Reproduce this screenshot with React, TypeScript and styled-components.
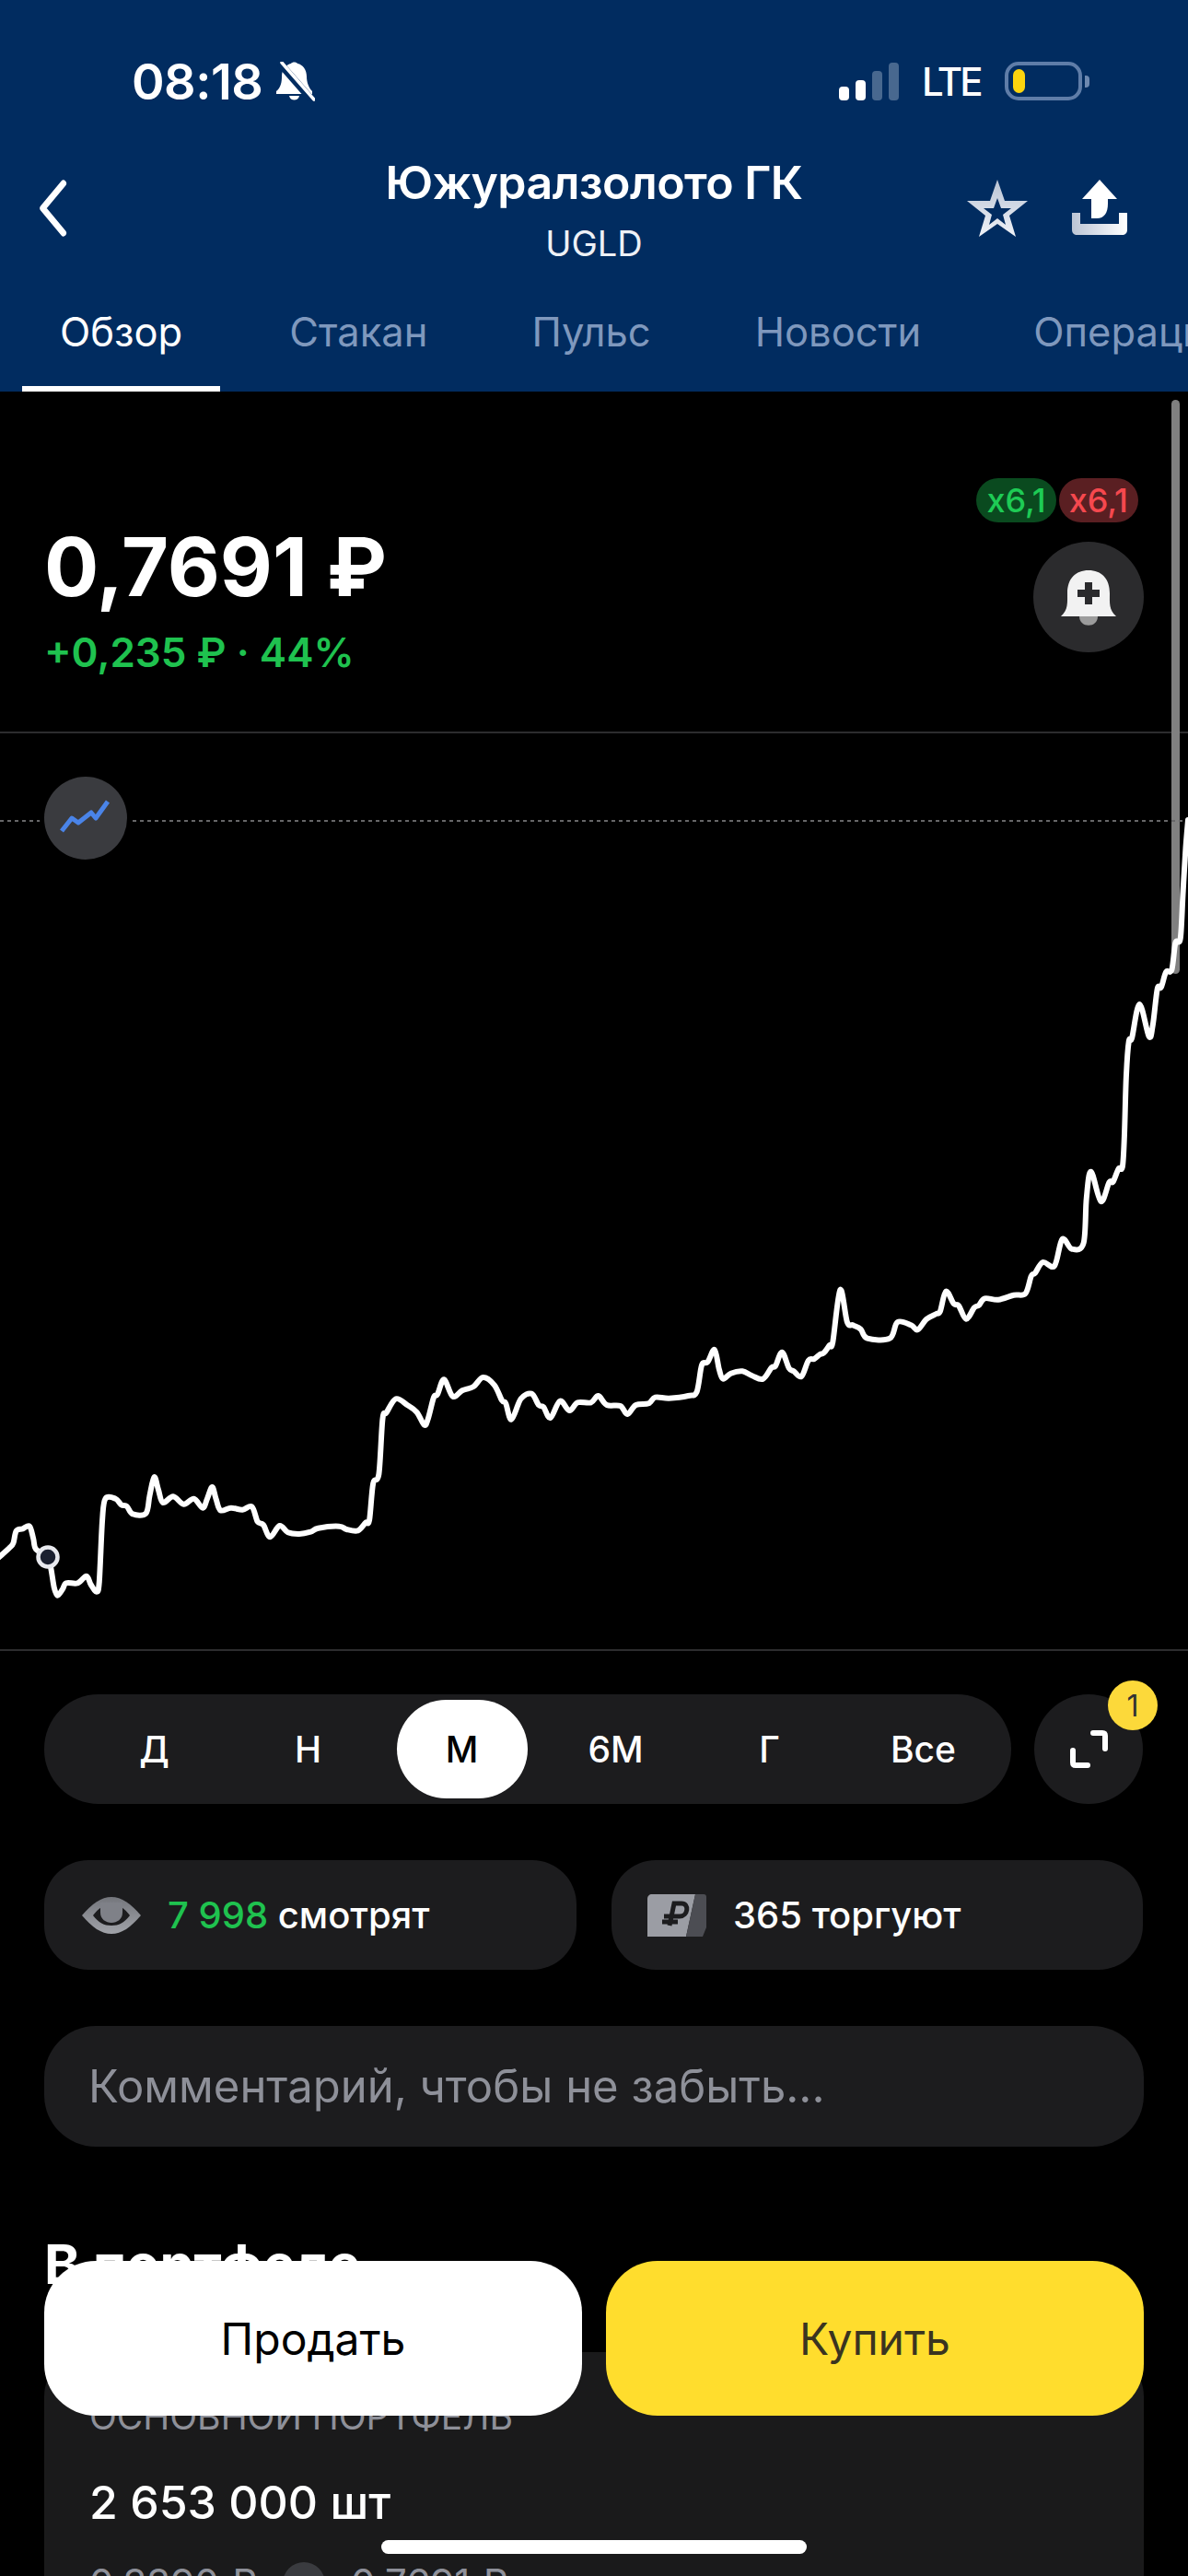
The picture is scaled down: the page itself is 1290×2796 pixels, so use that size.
import React from "react";
import styled, { createGlobalStyle } from "styled-components";

const FONT = `Inter, "Noto Sans", "Liberation Sans", sans-serif`;

const GlobalStyle = createGlobalStyle`
  html, body {
    margin: 0;
    background: #000;
  }
  body {
    font-family: ${FONT};
    color: #fff;
  }
`;

/* chart points were read off three crops, each with its own scale */
type Pt = [number, number];
const toPage = (pts: Pt[], ox: number, sx: number, oy: number): Pt[] =>
  pts.map(([x, y]) => [ox + x / sx, oy + y / 3]);

const left = toPage(
  [
    [-10, 1028], [12, 1005], [25, 990], [35, 975], [43, 935], [60, 928], [78, 920], [88, 960], [95, 995],
    [127, 1020], [135, 1060], [143, 1120], [152, 1145], [165, 1125], [175, 1105], [205, 1105], [228, 1082],
    [240, 1110], [255, 1133], [262, 1100], [270, 900], [278, 830], [305, 830], [320, 850], [335, 855],
    [350, 880], [385, 878], [395, 820], [407, 760], [418, 800], [430, 843], [457, 823], [485, 848],
    [512, 830], [535, 860], [547, 830], [560, 792], [570, 830], [582, 868], [610, 860], [640, 866],
    [665, 856], [680, 905], [695, 915], [713, 955], [738, 918], [760, 940], [790, 945], [820, 938],
    [840, 926], [895, 920], [915, 930], [945, 934], [965, 908], [975, 900], [985, 780], [1000, 750],
    [1010, 570], [1020, 550], [1045, 505], [1075, 525], [1100, 548], [1120, 590], [1130, 570], [1145, 500],
    [1155, 490], [1172, 442], [1195, 497], [1220, 478], [1250, 465], [1275, 435], [1305, 460], [1325, 510],
    [1335, 520], [1350, 572], [1375, 505], [1403, 488], [1422, 525], [1435, 532], [1453, 567], [1478, 512],
    [1503, 543], [1525, 517], [1560, 517],
  ],
  0, 2.431, 1350
);

const middle = toPage(
  [
    [118, 645], [140, 675], [175, 678], [193, 705], [215, 675], [248, 670], [265, 650], [300, 653], [350, 645],
    [372, 632], [385, 545], [400, 535], [418, 495], [430, 560], [440, 590], [460, 572], [490, 565], [515, 580],
    [543, 590], [565, 553], [575, 548], [592, 503], [610, 555], [622, 565], [642, 582], [660, 530], [675, 525],
    [690, 510], [700, 505], [715, 480], [723, 470], [742, 300], [760, 405], [775, 415], [795, 428], [812, 458],
    [870, 458], [890, 405], [925, 415], [942, 430], [965, 395], [990, 378], [1000, 370], [1015, 305], [1035, 345],
    [1048, 352], [1067, 395], [1088, 358], [1100, 350], [1115, 328], [1150, 332], [1190, 317], [1220, 312],
    [1235, 255], [1245, 245], [1265, 210], [1295, 222], [1315, 135], [1340, 167], [1370, 148],
  ],
  600, 2.376, 1300
);

const right = toPage(
  [
    [1300, 1200], [1312, 1115], [1338, 1212], [1360, 1150], [1370, 1148], [1385, 1105], [1395, 1100], [1400, 1000],
    [1405, 800], [1412, 690], [1420, 680], [1440, 570], [1465, 675], [1475, 640], [1487, 520], [1497, 515],
    [1510, 465], [1525, 458], [1535, 370], [1548, 355], [1555, 200], [1562, 60], [1568, -30],
  ],
  645, 2.431, 900
);

const smoothPath = (pts: Pt[]) => {
  let d = `M${pts[0][0].toFixed(1)} ${pts[0][1].toFixed(1)}`;
  for (let i = 0; i < pts.length - 1; i++) {
    const p0 = pts[Math.max(i - 1, 0)];
    const p1 = pts[i];
    const p2 = pts[i + 1];
    const p3 = pts[Math.min(i + 2, pts.length - 1)];
    const c1x = p1[0] + (p2[0] - p0[0]) / 6;
    const c1y = p1[1] + (p2[1] - p0[1]) / 6;
    const c2x = p2[0] - (p3[0] - p1[0]) / 6;
    const c2y = p2[1] - (p3[1] - p1[1]) / 6;
    d += `C${c1x.toFixed(1)} ${c1y.toFixed(1)} ${c2x.toFixed(1)} ${c2y.toFixed(1)} ${p2[0].toFixed(1)} ${p2[1].toFixed(1)}`;
  }
  return d;
};

const CHART_PATH = smoothPath([...left, ...middle, ...right]);

const TABS = ["Обзор", "Стакан", "Пульс", "Новости", "Операции"];
const RANGES = ["Д", "Н", "М", "6М", "Г", "Все"];
const SIGNAL = [
  { h: 15, on: true },
  { h: 22, on: true },
  { h: 32, on: false },
  { h: 41, on: false },
];

const BackIcon = () => (
  <svg width="37" height="62" viewBox="0 0 37 62" fill="none">
    <path d="M31 4 L6 31 L31 58" stroke="#fff" strokeWidth="7" strokeLinecap="round" strokeLinejoin="round" transform="matrix(.9 0 0 1 2 0)" />
  </svg>
);

const MutedBell = () => (
  <svg width="44" height="43" viewBox="0 0 44 43">
    <path d="M2 32 C7 28 8 22 8 16 C8 8 13 3 18 2 C19 0 24 0 25 2 C31 3 35 9 35 16 C35 22 37 28 41 32 L41 35 H2 Z" fill="#fff" />
    <path d="M16 37 H27 C26 43 17 43 16 37 Z" fill="#fff" />
    <path d="M6 2 L41 42" stroke="#012c60" strokeWidth="8" />
    <path d="M8 1 L43 41" stroke="#fff" strokeWidth="3.5" strokeLinecap="round" />
  </svg>
);

const StarIcon = () => (
  <svg width="66" height="64" viewBox="0 0 66 64">
    <defs>
      <linearGradient id="starFill" x1="0" y1="0" x2="0" y2="1">
        <stop offset="0" stopColor="#b9c3d4" />
        <stop offset="1" stopColor="#f0f3f8" />
      </linearGradient>
    </defs>
    <path
      fillRule="evenodd"
      fill="url(#starFill)"
      d="M33 1 L41 24 L66 24 L46 40 L53 63 L33 49 L13 63 L20 40 L0 24 L25 24 Z M33 21 L29 32 L18 32 L27 39 L24 50 L33 43 L42 50 L39 39 L48 32 L37 32 Z"
    />
  </svg>
);

const ShareIcon = () => (
  <svg width="60" height="61" viewBox="0 0 60 61">
    <defs>
      <linearGradient id="shareFill" x1="0" y1="0" x2="1" y2="0">
        <stop offset="0" stopColor="#bcc5d5" />
        <stop offset="1" stopColor="#fff" />
      </linearGradient>
    </defs>
    <path d="M30 0 L49 21 L39 21 L39 26 C39 36 35 42 27 42 L21 42 L21 21 L11 21 Z" fill="#fff" />
    <path d="M0 36 H9 V48 H51 V36 H60 V54 C60 58 58 60 54 60 H6 C2 60 0 58 0 54 Z" fill="url(#shareFill)" />
  </svg>
);

const AlertBell = () => (
  <svg width="120" height="120" viewBox="0 0 120 120">
    <path d="M50 80 H70 V81 C70 94 50 94 50 81 Z" fill="#9c9c9c" />
    <path d="M30 81 C38 74 37 66 37 56 C37 40 46 31 60 31 C74 31 83 40 83 56 C83 66 82 74 90 81 Z" fill="#f2f2f2" />
    <path d="M56 44 H64 V52 H72 V60 H64 V68 H56 V60 H48 V52 H56 Z" fill="#2b2b2d" />
  </svg>
);

const TrendIcon = () => (
  <svg width="90" height="90" viewBox="0 0 90 90" fill="none">
    <path d="M19 59 L30 45 L37 50 L51 39 L56 45 L69 27" stroke="#4a84e8" strokeWidth="5" strokeLinejoin="round" />
  </svg>
);

const ExpandIcon = () => (
  <svg width="118" height="120" viewBox="0 0 118 120" fill="none">
    <path d="M64 42 H74 C76 42 77 43 77 45 V59" stroke="#fff" strokeWidth="6" strokeLinecap="round" />
    <path d="M42 61 V74 C42 76 43 77 45 77 H58" stroke="#fff" strokeWidth="6" strokeLinecap="round" />
  </svg>
);

const EyeIcon = () => (
  <svg width="66" height="40" viewBox="0 0 66 40">
    <defs>
      <linearGradient id="eyeFill" x1="0" y1="0" x2="0" y2="1">
        <stop offset="0" stopColor="#74767c" />
        <stop offset="1" stopColor="#a1a3a9" />
      </linearGradient>
    </defs>
    <path d="M1 20 C12 7 22 0 33 0 C44 0 54 7 65 20 C54 33 44 40 33 40 C22 40 12 33 1 20 Z" fill="url(#eyeFill)" />
    <path d="M13 20 C19 12 25 8 33 8 C41 8 47 12 53 20 C47 28 41 31 33 31 C25 31 19 28 13 20 Z" fill="#1c1c1e" />
    <path d="M21 6 H45 V17 C45 24 39 28 33 28 C27 28 21 24 21 17 Z" fill="#7f8188" />
  </svg>
);

const TradeIcon = () => (
  <svg width="64" height="46" viewBox="0 0 64 46" fill="none">
    <path d="M5 0 H52 L42 46 H0 V5 C0 2 2 0 5 0 Z" fill="#9b9da4" />
    <path d="M52 0 H61 C63 0 64 1 64 3 V36 L60 46 H42 Z" fill="#4c4d53" />
    <path d="M24 34 L29 10 H37 C46 10 44 24 35 24 H18 M16 30 H33" stroke="#1c1c1e" strokeWidth="5" />
  </svg>
);

const ArrowIcon = () => (
  <svg width="22" height="22" viewBox="0 0 22 22" fill="none">
    <path d="M3 11 H18 M12 5 L18 11 L12 17" stroke="#9a9ba1" strokeWidth="3" />
  </svg>
);

export default function App() {
  return (
    <Page>
      <GlobalStyle />
      <Scrollbar />
      <Header>
        <StatusBar>
          <StatusLeft>
            <Time>08:18</Time>
            <MutedBell />
          </StatusLeft>
          <StatusRight>
            <Signal>
              {SIGNAL.map((bar) => (
                <SignalBar key={bar.h} $height={bar.h} $on={bar.on} />
              ))}
            </Signal>
            <Network>LTE</Network>
            <Battery>
              <BatteryLevel />
            </Battery>
          </StatusRight>
        </StatusBar>
        <NavRow>
          <BackButton>
            <BackIcon />
          </BackButton>
          <TitleBlock>
            <Title>Южуралзолото ГК</Title>
            <Ticker>UGLD</Ticker>
          </TitleBlock>
          <NavActions>
            <StarIcon />
            <ShareIcon />
          </NavActions>
        </NavRow>
        <Tabs>
          {TABS.map((tab, i) => (
            <Tab key={tab} $active={i === 0}>
              {tab}
            </Tab>
          ))}
        </Tabs>
      </Header>

      <PriceSection>
        <div>
          <Price>0,7691 ₽</Price>
          <Change>+0,235 ₽ · 44%</Change>
        </div>
        <PriceSide>
          <Badges>
            <Badge $tone="up">x6,1</Badge>
            <Badge $tone="down">x6,1</Badge>
          </Badges>
          <RoundButton>
            <AlertBell />
          </RoundButton>
        </PriceSide>
      </PriceSection>

      <ChartSection>
        <ChartSvg viewBox="0 796 1290 994">
          <line x1="0" y1="891" x2="1290" y2="891" stroke="#666668" strokeWidth="2" strokeDasharray="4 4" />
          <path d={CHART_PATH} fill="none" stroke="#fff" strokeWidth="6" strokeLinejoin="round" strokeLinecap="round" />
          <circle cx="52" cy="1690" r="10.5" fill="#1b2030" stroke="#e8e9ee" strokeWidth="4.5" />
        </ChartSvg>
        <ChartMode>
          <TrendIcon />
        </ChartMode>
      </ChartSection>

      <RangeRow>
        <RangePill>
          {RANGES.map((range) => (
            <RangeItem key={range} $selected={range === "М"}>
              {range}
            </RangeItem>
          ))}
        </RangePill>
        <ExpandButton>
          <ExpandIcon />
          <CountBadge>1</CountBadge>
        </ExpandButton>
      </RangeRow>

      <StatsRow>
        <StatCard>
          <EyeIcon />
          <StatText>
            <StatAccent>7 998</StatAccent> смотрят
          </StatText>
        </StatCard>
        <StatCard $trade>
          <TradeIcon />
          <StatText>365 торгуют</StatText>
        </StatCard>
      </StatsRow>

      <CommentBox>Комментарий, чтобы не забыть...</CommentBox>

      <SectionTitle>В портфеле</SectionTitle>
      <PortfolioCard>
        <PortfolioName>ОСНОВНОЙ ПОРТФЕЛЬ</PortfolioName>
        <Quantity>2 653 000 шт</Quantity>
        <PriceChange>
          <span>0,3390 ₽</span>
          <ArrowCircle>
            <ArrowIcon />
          </ArrowCircle>
          <span>0,7691 ₽</span>
        </PriceChange>
      </PortfolioCard>

      <ActionBar>
        <ActionButton $variant="sell">Продать</ActionButton>
        <ActionButton $variant="buy">Купить</ActionButton>
      </ActionBar>
      <HomeIndicator />
    </Page>
  );
}

const Page = styled.div`
  position: relative;
  width: 1290px;
  height: 2796px;
  overflow: hidden;
  background: #000;
`;

const Scrollbar = styled.div`
  position: absolute;
  top: 434px;
  left: 1272px;
  width: 9px;
  height: 623px;
  border-radius: 5px;
  background: #808080;
`;

const Header = styled.header`
  display: flex;
  flex-direction: column;
  height: 425px;
  padding-top: 58px;
  box-sizing: border-box;
  background: #012c60;
`;

const StatusBar = styled.div`
  display: flex;
  align-items: center;
  justify-content: space-between;
  height: 60px;
  padding: 0 115px 0 143px;
`;

const StatusLeft = styled.div`
  display: flex;
  align-items: center;
  gap: 13px;
`;

const Time = styled.span`
  font-size: 54px;
  font-weight: 600;
  letter-spacing: -0.5px;
`;

const StatusRight = styled.div`
  display: flex;
  align-items: center;
`;

const Signal = styled.div`
  display: flex;
  align-items: flex-end;
  gap: 7px;
  height: 41px;
  margin-right: 25px;
`;

const SignalBar = styled.div<{ $height: number; $on: boolean }>`
  width: 11px;
  height: ${({ $height }) => $height}px;
  border-radius: 4px;
  background: ${({ $on }) => ($on ? "#fff" : "#48688f")};
`;

const Network = styled.span`
  width: 62px;
  margin-right: 28px;
  font-size: 42px;
  font-weight: 500;
  letter-spacing: -3px;
`;

const Battery = styled.div`
  position: relative;
  display: flex;
  align-items: center;
  width: 84px;
  height: 42px;
  padding: 0 5px;
  box-sizing: border-box;
  border: 4px solid #5f7da8;
  border-radius: 15px;

  &::after {
    content: "";
    position: absolute;
    top: 11px;
    right: -12px;
    width: 5px;
    height: 13px;
    border-radius: 0 4px 4px 0;
    background: #6e89b0;
  }
`;

const BatteryLevel = styled.div`
  width: 13px;
  height: 26px;
  border-radius: 7px;
  background: #fcd40e;
`;

const NavRow = styled.div`
  display: grid;
  grid-template-columns: 1fr auto 1fr;
  align-items: center;
  margin-top: 47px;
  padding: 0 66px;
`;

const BackButton = styled.div`
  display: flex;
  margin-left: -27px;
`;

const TitleBlock = styled.div`
  display: flex;
  flex-direction: column;
  align-items: center;
  gap: 11px;
`;

const Title = styled.div`
  font-size: 50px;
  font-weight: 600;
  line-height: 66px;
  letter-spacing: -0.5px;
`;

const Ticker = styled.div`
  font-size: 38px;
  line-height: 44px;
  color: #eef1f6;
`;

const NavActions = styled.div`
  display: flex;
  align-items: center;
  justify-content: flex-end;
  gap: 48px;
`;

const Tabs = styled.nav`
  display: flex;
  gap: 31px;
  margin-top: 44px;
  padding-left: 24px;
  overflow: hidden;
`;

const Tab = styled.div<{ $active: boolean }>`
  flex: none;
  padding: 0 41px 29px;
  border-bottom: 6px solid ${({ $active }) => ($active ? "#fff" : "transparent")};
  font-size: 43.5px;
  line-height: 60px;
  color: ${({ $active }) => ($active ? "#fff" : "#7f98bd")};

  &:first-child {
    margin-right: 3px;
  }

  &:last-child {
    margin-left: 9px;
  }
`;

const PriceSection = styled.section`
  display: flex;
  justify-content: space-between;
  height: 371px;
  padding: 0 48px;
  box-sizing: border-box;
  border-bottom: 2px solid #2c2c2e;
`;

const Price = styled.div`
  margin-top: 140px;
  font-size: 88px;
  font-weight: 700;
  line-height: 100px;
`;

const Change = styled.div`
  margin-top: 15px;
  font-size: 44px;
  font-weight: 600;
  line-height: 56px;
  color: #1fc24f;
`;

const PriceSide = styled.div`
  display: flex;
  flex-direction: column;
  align-items: flex-end;
  padding-top: 94px;
`;

const Badges = styled.div`
  display: flex;
  gap: 3px;
  margin-right: 6px;
`;

const Badge = styled.div<{ $tone: "up" | "down" }>`
  display: flex;
  align-items: center;
  justify-content: center;
  height: 48px;
  padding: 0 11px;
  border-radius: 24px;
  font-size: 36px;
  font-weight: 500;
  color: ${({ $tone }) => ($tone === "up" ? "#1ecb55" : "#f5484e")};
  background: ${({ $tone }) => ($tone === "up" ? "#0a4a1f" : "#5a1f22")};
`;

const RoundButton = styled.div`
  width: 120px;
  height: 120px;
  margin-top: 21px;
  border-radius: 50%;
  background: #2b2b2d;
`;

const ChartSection = styled.section`
  position: relative;
  height: 994px;
  border-bottom: 2px solid #2c2c2e;
`;

const ChartSvg = styled.svg`
  position: relative;
  display: block;
  width: 1290px;
  height: 994px;
`;

const ChartMode = styled.div`
  position: absolute;
  top: 47px;
  left: 48px;
  width: 90px;
  height: 90px;
  border-radius: 50%;
  background: #3a3b3f;
  box-shadow: 0 0 0 5px #000;
`;

const RangeRow = styled.div`
  display: flex;
  gap: 25px;
  margin-top: 47px;
  padding: 0 49px 0 48px;
`;

const RangePill = styled.div`
  display: grid;
  flex: 1;
  grid-template-columns: repeat(6, 167px);
  justify-content: start;
  align-items: center;
  height: 119px;
  padding-left: 36px;
  border-radius: 59px;
  background: #1c1c1e;
`;

const RangeItem = styled.div<{ $selected: boolean }>`
  display: flex;
  align-items: center;
  justify-content: center;
  width: 142px;
  height: 107px;
  justify-self: center;
  border-radius: 54px;
  font-size: 39px;
  font-weight: 500;
  color: ${({ $selected }) => ($selected ? "#000" : "#fff")};
  background: ${({ $selected }) => ($selected ? "#fff" : "transparent")};
`;

const ExpandButton = styled.div`
  position: relative;
  width: 118px;
  height: 119px;
  border-radius: 50%;
  background: #1c1c1e;
`;

const CountBadge = styled.div`
  position: absolute;
  top: -15px;
  right: -16px;
  display: flex;
  align-items: center;
  justify-content: center;
  width: 54px;
  height: 54px;
  border-radius: 50%;
  font-size: 32px;
  color: #333;
  background: #fcd93a;
`;

const StatsRow = styled.div`
  display: grid;
  grid-template-columns: 578px 577px;
  gap: 38px;
  margin-top: 61px;
  padding: 0 48px;
`;

const StatCard = styled.div<{ $trade?: boolean }>`
  display: flex;
  align-items: center;
  gap: ${({ $trade }) => ($trade ? "29px" : "28px")};
  height: 119px;
  padding-left: ${({ $trade }) => ($trade ? "39px" : "40px")};
  border-radius: 48px;
  background: #1c1c1e;
`;

const StatText = styled.span`
  font-size: 40px;
  font-weight: 500;
  white-space: pre;
`;

const StatAccent = styled.span`
  color: #1fc24f;
`;

const CommentBox = styled.div`
  display: flex;
  align-items: center;
  height: 131px;
  margin: 61px 48px 0;
  padding-left: 48px;
  border-radius: 56px;
  font-size: 49px;
  color: #8e9099;
  background: #1c1c1e;
`;

const SectionTitle = styled.h2`
  margin: 94px 0 0 48px;
  font-size: 59px;
  font-weight: 700;
  line-height: 68px;
`;

const PortfolioCard = styled.section`
  height: 400px;
  margin: 61px 48px 0;
  padding: 46px 49px 0;
  border-radius: 48px;
  background: #1a1a1b;
`;

const PortfolioName = styled.div`
  font-size: 39px;
  line-height: 48px;
  color: #8e9099;
`;

const Quantity = styled.div`
  margin-top: 39px;
  font-size: 50px;
  font-weight: 500;
  line-height: 60px;
`;

const PriceChange = styled.div`
  display: flex;
  align-items: center;
  gap: 28px;
  margin-top: 35px;
  font-size: 42px;
  line-height: 46px;
  color: #8e9099;
`;

const ArrowCircle = styled.div`
  display: flex;
  align-items: center;
  justify-content: center;
  width: 46px;
  height: 46px;
  border-radius: 50%;
  background: #3a3b3f;
`;

const ActionBar = styled.div`
  position: absolute;
  left: 48px;
  right: 48px;
  bottom: 174px;
  display: grid;
  grid-template-columns: 1fr 1fr;
  gap: 26px;
`;

const ActionButton = styled.div<{ $variant: "sell" | "buy" }>`
  display: flex;
  align-items: center;
  justify-content: center;
  height: 168px;
  border-radius: 56px;
  font-size: 48px;
  color: ${({ $variant }) => ($variant === "sell" ? "#000" : "#3a3420")};
  background: ${({ $variant }) => ($variant === "sell" ? "#fff" : "#ffdd2d")};
`;

const HomeIndicator = styled.div`
  position: absolute;
  left: 414px;
  bottom: 24px;
  width: 462px;
  height: 15px;
  border-radius: 8px;
  background: #fff;
`;
